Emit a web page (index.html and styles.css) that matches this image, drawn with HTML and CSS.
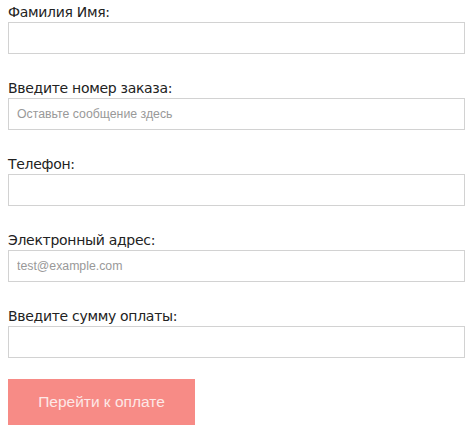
FILE: index.html
```html
<!DOCTYPE html>
<html lang="ru">
<head>
    <meta charset="UTF-8">
    <meta name="viewport" content="width=device-width, initial-scale=1.0">
    <title>Оплата заказа</title>
    <link rel="stylesheet" href="styles.css">
</head>
<body>
    <form class="pay-form">
        <div class="field">
            <label for="name">Фамилия Имя:</label>
            <input type="text" id="name">
        </div>

        <div class="field">
            <label for="order">Введите номер заказа:</label>
            <input type="text" id="order" placeholder="Оставьте сообщение здесь">
        </div>

        <div class="field">
            <label for="phone">Телефон:</label>
            <input type="text" id="phone">
        </div>

        <div class="field">
            <label for="email">Электронный адрес:</label>
            <input type="text" id="email" placeholder="test@example.com">
        </div>

        <div class="field">
            <label for="sum">Введите сумму оплаты:</label>
            <input type="text" id="sum">
        </div>

        <button type="button" class="pay-btn">Перейти к оплате</button>
    </form>
</body>
</html>
```

FILE: styles.css
```css
* {
    margin: 0;
    padding: 0;
    box-sizing: border-box;
}

body {
    background: #ffffff;
    padding: 0 9px 0 8px;
    font-family: 'DejaVu Sans', Verdana, sans-serif;
    color: #222222;
}

.field {
    margin-bottom: 22px;
}

.field label {
    display: block;
    font-size: 14px;
    line-height: 18px;
    letter-spacing: -0.3px;
    padding-top: 3px;
    margin-bottom: 1px;
}

.field input {
    display: block;
    width: 100%;
    height: 32px;
    border: 1px solid #d2d2d2;
    background: #ffffff;
    padding: 0 8px;
    font-family: 'Liberation Sans', Arial, sans-serif;
    font-size: 12.3px;
    color: #333333;
    outline: none;
}

.field input::placeholder {
    color: #999999;
}

.pay-btn {
    display: block;
    width: 187px;
    height: 46px;
    margin-top: -1px;
    border: none;
    background: #f78b86;
    color: #fde8e7;
    font-family: 'Liberation Sans', Arial, sans-serif;
    font-size: 15.5px;
    cursor: pointer;
}
```
